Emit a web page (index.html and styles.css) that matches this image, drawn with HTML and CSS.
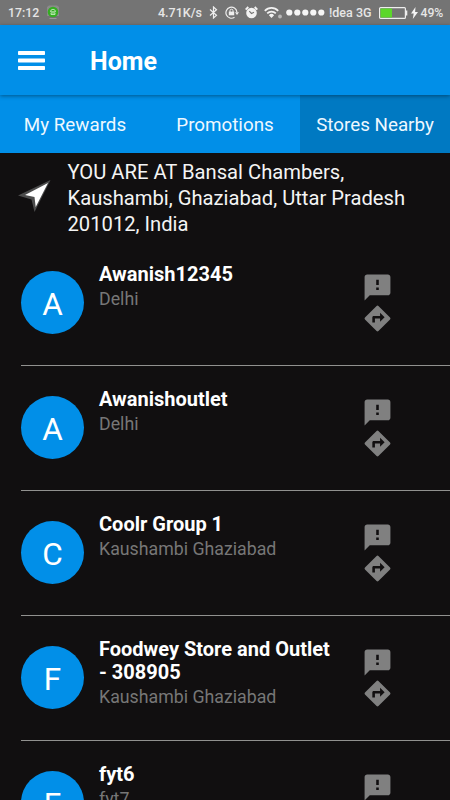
FILE: index.html
```html
<!DOCTYPE html>
<html lang="en">
<head>
<meta charset="utf-8">
<title>Home</title>
<link rel="stylesheet" href="styles.css">
</head>
<body>
<svg width="0" height="0" class="defs">
  <symbol id="feedback" viewBox="0 0 24 24"><path d="M20 2H4c-1.100 0-1.990.9-1.990 2L2 22l4-4h14c1.100 0 2-.9 2-2V4c0-1.100-.9-2-2-2zm-7 12h-2v-2h2v2zm0-4h-2V6h2v4z"/></symbol>
  <symbol id="directions" viewBox="0 0 24 24"><path d="M21.710 11.290l-9-9a1 1 0 0 0-1.410 0l-9 9a1 1 0 0 0 0 1.410l9 9c.39.390 1.020.390 1.410 0l9-9a1 1 0 0 0 0-1.410zM14 14.500V12h-4v3H8v-4c0-.55.450-1 1-1h5V7.500l3.500 3.500-3.500 3.500z"/></symbol>
</svg>
<div class="status">
  <span class="time">17:12</span>
  <svg class="bot" width="14" height="15" viewBox="0 0 14 15"><path d="M1 2 3 .5h8L13 2v9H1z" fill="#8b8b8b"/><path d="M3.500 13.500h7" stroke="#999"/><circle cx="7" cy="7" r="5.300" fill="#35ad22"/><path d="M4.500 6.800a2.500 2.500 0 0 1 5 0zM5 8h4v1.500H5z" fill="none" stroke="#c3eabb" stroke-width=".9"/></svg>
  <span class="speed">4.71K/s</span>
  <svg class="bt" width="9" height="13" viewBox="0 0 9 13"><path d="M1 3.500l6.500 5.800-3 2.700V1l3 2.700L1 9.500" fill="none" stroke="#eee" stroke-width="1.200"/></svg>
  <svg class="lock" width="14" height="13" viewBox="0 0 14 13"><path d="M9.500 11.300A5.500 5.500 0 1 1 11.900 6" fill="none" stroke="#eee" stroke-width="1.200"/><path d="M10 6.200h4L12 8.900z" fill="#eee"/><path d="M3.800 5.600h5.400v3.700H3.800z" fill="#eee"/><path d="M5 6V4.700a1.500 1.500 0 0 1 3 0V6" fill="none" stroke="#eee"/></svg>
  <svg class="alarm" width="13" height="13" viewBox="0 0 13 13"><circle cx="6.500" cy="7" r="5.300" fill="#f2f2f2"/><path d="M.7 3.600 3.300 1M9.700 1l2.600 2.600" stroke="#f2f2f2" stroke-width="1.900"/><path d="M4.300 5.200 6.500 7.500 9 6.300" fill="none" stroke="#747474" stroke-width="1.100"/></svg>
  <svg class="wifi" width="19" height="13" viewBox="0 0 19 13"><path d="M.8 4.800a9.300 9.300 0 0 1 13.400 0M3.200 7.400a6 6 0 0 1 8.600 0" fill="none" stroke="#f2f2f2" stroke-width="1.700"/><path d="M4.900 9.200a3.600 3.600 0 0 1 5.200 0L7.500 12z" fill="#f2f2f2"/><circle cx="16" cy="10.500" r="1.900" fill="#b8b8b8"/></svg>
  <svg class="dots" width="39" height="7" viewBox="0 0 39 7" fill="#f5f5f5"><circle cx="3.300" cy="3.500" r="3.100"/><circle cx="11.300" cy="3.500" r="3.100"/><circle cx="19.300" cy="3.500" r="3.100"/><circle cx="27.300" cy="3.500" r="3.100"/><circle cx="35.300" cy="3.500" r="3.100"/></svg>
  <span class="carrier">!dea 3G</span>
  <svg class="battery" width="30" height="12" viewBox="0 0 30 12"><rect x=".6" y=".6" width="25.800" height="10.800" rx="1" fill="#747474" stroke="#eee" stroke-width="1.200"/><path d="M1.500 1.500H13v9H1.500z" fill="#5bd72a"/><path d="M27 3.500h1.300v5H27z" fill="#eee"/></svg>
  <svg class="bolt" width="7" height="12" viewBox="0 0 7 12"><path d="M4.500 0 0 6.500h2.700L1.800 12 7 5H4.100z" fill="#f5f5f5"/></svg>
  <span class="percent">49%</span>
</div>
<header class="header">
  <svg class="menu" width="27" height="19" viewBox="0 0 27 19" fill="#fff"><rect width="27" height="4" rx=".7"/><rect y="7.500" width="27" height="4" rx=".7"/><rect y="15" width="27" height="4" rx=".7"/></svg>
  <h1>Home</h1>
</header>
<nav class="tabs">
  <span>My Rewards</span><span>Promotions</span><span class="active">Stores Nearby</span>
</nav>
<section class="location">
  <svg class="arrow" width="34" height="34" viewBox="0 0 34 34"><path d="M32.500 1 0 16.500l13.500 4L16.500 33z" fill="#4c4c4c"/><path d="M30 4 7 16l9.500 2 1.200 10z" fill="#fff"/></svg>
  <p>YOU ARE AT Bansal Chambers,<br>Kaushambi, Ghaziabad, Uttar Pradesh<br>201012, India</p>
</section>
<main class="list">
  <article class="row"><div class="avatar">A</div><div class="info"><h2>Awanish12345</h2><p>Delhi</p></div><div class="actions"><svg><use href="#feedback"/></svg><svg><use href="#directions"/></svg></div></article>
  <article class="row"><div class="avatar">A</div><div class="info"><h2>Awanishoutlet</h2><p>Delhi</p></div><div class="actions"><svg><use href="#feedback"/></svg><svg><use href="#directions"/></svg></div></article>
  <article class="row"><div class="avatar">C</div><div class="info"><h2>Coolr Group 1</h2><p>Kaushambi Ghaziabad</p></div><div class="actions"><svg><use href="#feedback"/></svg><svg><use href="#directions"/></svg></div></article>
  <article class="row"><div class="avatar">F</div><div class="info"><h2>Foodwey Store and Outlet<br>- 308905</h2><p>Kaushambi Ghaziabad</p></div><div class="actions"><svg><use href="#feedback"/></svg><svg><use href="#directions"/></svg></div></article>
  <article class="row"><div class="avatar">F</div><div class="info"><h2>fyt6</h2><p>fyt7</p></div><div class="actions"><svg><use href="#feedback"/></svg><svg><use href="#directions"/></svg></div></article>
</main>
</body>
</html>
```
FILE: styles.css
```css
* { box-sizing: border-box; margin: 0; padding: 0; }
body {
  display: flex;
  flex-direction: column;
  width: 450px;
  height: 800px;
  overflow: hidden;
  background: #110f10;
  color: #fff;
  font-family: Roboto, "Liberation Sans", sans-serif;
}
.defs { position: absolute; }
svg { display: block; flex: none; }
.status {
  display: flex;
  align-items: center;
  flex: none;
  height: 25px;
  padding-left: 8px;
  background: #747474;
  color: #e6e6e6;
  font-size: 12.5px;
  font-weight: 500;
  white-space: nowrap;
}
.status span { flex: none; }
.time { width: 38px; font-size: 12.3px; }
.speed { width: 51px; margin-left: 98px; }
.lock { margin-left: 7px; }
.alarm { margin-left: 6px; }
.wifi { margin-left: 6px; }
.dots { margin-left: 3px; }
.carrier { width: 50px; margin-left: 4px; }
.battery { margin-left: -.5px; }
.bolt { margin-left: 2px; }
.percent { margin-left: 3px; font-size: 12.2px; }
.header {
  position: relative;
  display: flex;
  align-items: center;
  flex: none;
  height: 70px;
  padding: 2px 0 0 18px;
  background: #018fe8;
  box-shadow: 0 1px 4px rgba(0, 0, 0, .4);
}
.header .menu { margin-top: -1px; }
.header h1 { margin: 2px 0 0 45px; font-size: 25px; font-weight: 700; line-height: 30px; }
.tabs { display: grid; grid-template-columns: repeat(3, 1fr); flex: none; height: 58px; background: #018fe8; }
.tabs span { display: flex; align-items: center; justify-content: center; padding-top: 1px; font-size: 18.8px; color: #eef8ff; }
.tabs .active { background: #0079c2; }
.location { display: flex; flex: none; height: 88px; padding: 5px 0 0 18px; }
.location .arrow { margin: 21px 16px 0 -.5px; }
.location p { margin-top: 1px; font-size: 20.2px; line-height: 26px; color: #f4f4f4; white-space: nowrap; }
.list { flex: none; }
.row { display: flex; height: 125px; margin-left: 21px; border-bottom: 1px solid #91918f; }
.avatar {
  display: flex;
  align-items: center;
  justify-content: center;
  flex: none;
  width: 63px;
  height: 63px;
  margin-top: 30px;
  padding-top: 4px;
  border-radius: 50%;
  background: #018fe8;
  font-size: 31.5px;
}
.info { width: 262px; padding: 22px 0 0 15px; white-space: nowrap; }
.info h2 { font-size: 20px; font-weight: 700; line-height: 23px; }
.info p { margin-top: 2px; font-size: 17.75px; line-height: 23px; color: #777; }
.actions { padding: 30.5px 0 0 15.5px; }
.actions svg { width: 31px; height: 31px; fill: #808080; }
.actions svg + svg { margin-top: .5px; }
```
